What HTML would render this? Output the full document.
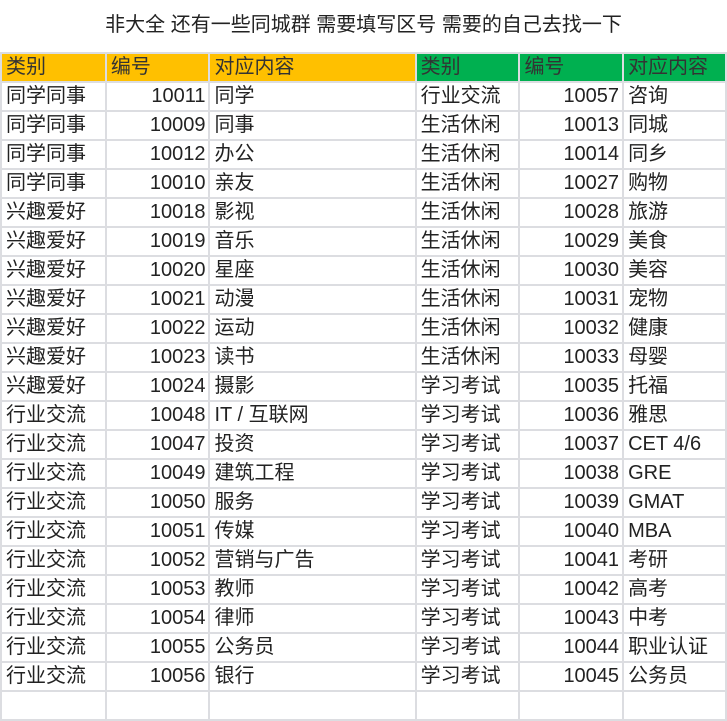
<!DOCTYPE html>
<html><head><meta charset="utf-8"><style>
body{margin:0;width:727px;height:700px;overflow:hidden;background:#fff;font-family:"Liberation Sans","Noto Sans CJK SC",sans-serif;color:#222;}
.t{position:absolute;top:0;left:0;width:727px;height:52px;text-align:center;line-height:50px;font-size:20px;}
table{position:absolute;top:52px;left:0;border-collapse:collapse;table-layout:fixed;}
td{border:2px solid #dcdde1;height:27px;padding:0 4px;font-size:20px;line-height:27px;white-space:nowrap;overflow:hidden;}
td.n{text-align:right;padding-right:3px;}
tr.h td{color:#333;}
.y{background:#ffc000;}
.g{background:#00b050;}
</style></head><body>
<div class="t">非大全 还有一些同城群 需要填写区号 需要的自己去找一下</div>
<table>
<colgroup><col style="width:105px"><col style="width:104px"><col style="width:207px"><col style="width:104px"><col style="width:104px"><col style="width:103px"></colgroup>
<tr class="h"><td class="y">类别</td><td class="y">编号</td><td class="y">对应内容</td><td class="g">类别</td><td class="g">编号</td><td class="g">对应内容</td></tr>
<tr><td>同学同事</td><td class="n">10011</td><td>同学</td><td>行业交流</td><td class="n">10057</td><td>咨询</td></tr>
<tr><td>同学同事</td><td class="n">10009</td><td>同事</td><td>生活休闲</td><td class="n">10013</td><td>同城</td></tr>
<tr><td>同学同事</td><td class="n">10012</td><td>办公</td><td>生活休闲</td><td class="n">10014</td><td>同乡</td></tr>
<tr><td>同学同事</td><td class="n">10010</td><td>亲友</td><td>生活休闲</td><td class="n">10027</td><td>购物</td></tr>
<tr><td>兴趣爱好</td><td class="n">10018</td><td>影视</td><td>生活休闲</td><td class="n">10028</td><td>旅游</td></tr>
<tr><td>兴趣爱好</td><td class="n">10019</td><td>音乐</td><td>生活休闲</td><td class="n">10029</td><td>美食</td></tr>
<tr><td>兴趣爱好</td><td class="n">10020</td><td>星座</td><td>生活休闲</td><td class="n">10030</td><td>美容</td></tr>
<tr><td>兴趣爱好</td><td class="n">10021</td><td>动漫</td><td>生活休闲</td><td class="n">10031</td><td>宠物</td></tr>
<tr><td>兴趣爱好</td><td class="n">10022</td><td>运动</td><td>生活休闲</td><td class="n">10032</td><td>健康</td></tr>
<tr><td>兴趣爱好</td><td class="n">10023</td><td>读书</td><td>生活休闲</td><td class="n">10033</td><td>母婴</td></tr>
<tr><td>兴趣爱好</td><td class="n">10024</td><td>摄影</td><td>学习考试</td><td class="n">10035</td><td>托福</td></tr>
<tr><td>行业交流</td><td class="n">10048</td><td>IT / 互联网</td><td>学习考试</td><td class="n">10036</td><td>雅思</td></tr>
<tr><td>行业交流</td><td class="n">10047</td><td>投资</td><td>学习考试</td><td class="n">10037</td><td>CET 4/6</td></tr>
<tr><td>行业交流</td><td class="n">10049</td><td>建筑工程</td><td>学习考试</td><td class="n">10038</td><td>GRE</td></tr>
<tr><td>行业交流</td><td class="n">10050</td><td>服务</td><td>学习考试</td><td class="n">10039</td><td>GMAT</td></tr>
<tr><td>行业交流</td><td class="n">10051</td><td>传媒</td><td>学习考试</td><td class="n">10040</td><td>MBA</td></tr>
<tr><td>行业交流</td><td class="n">10052</td><td>营销与广告</td><td>学习考试</td><td class="n">10041</td><td>考研</td></tr>
<tr><td>行业交流</td><td class="n">10053</td><td>教师</td><td>学习考试</td><td class="n">10042</td><td>高考</td></tr>
<tr><td>行业交流</td><td class="n">10054</td><td>律师</td><td>学习考试</td><td class="n">10043</td><td>中考</td></tr>
<tr><td>行业交流</td><td class="n">10055</td><td>公务员</td><td>学习考试</td><td class="n">10044</td><td>职业认证</td></tr>
<tr><td>行业交流</td><td class="n">10056</td><td>银行</td><td>学习考试</td><td class="n">10045</td><td>公务员</td></tr>
<tr><td></td><td></td><td></td><td></td><td></td><td></td></tr>
</table>
</body></html>
